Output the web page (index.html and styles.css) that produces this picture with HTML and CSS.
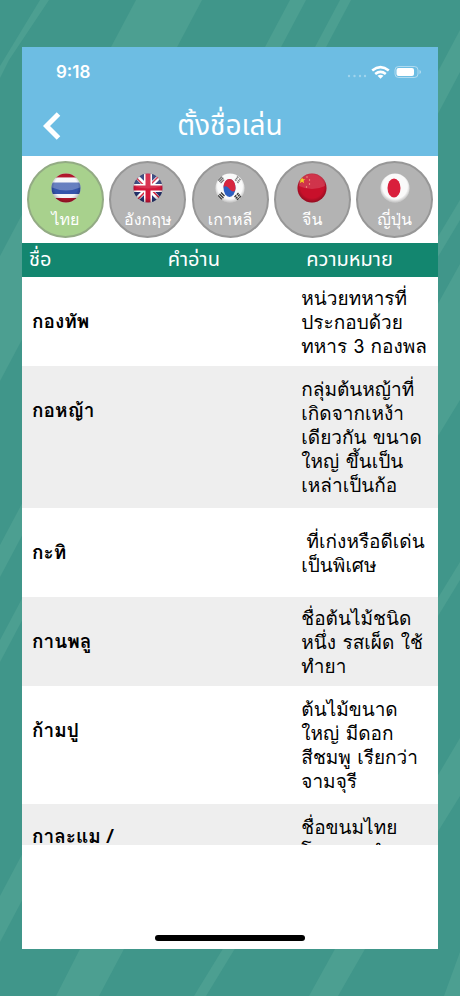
FILE: index.html
```html
<!DOCTYPE html>
<html lang="th">
<head>
<meta charset="utf-8">
<meta name="viewport" content="width=device-width, initial-scale=1">
<title>ตั้งชื่อเล่น</title>
<link rel="stylesheet" href="styles.css">
</head>
<body>
<svg class="backdrop" viewBox="0 0 460 996" preserveAspectRatio="none" aria-hidden="true">
  <g fill="#4c9f91">
    <path d="M40 0h9L9 60 0 78V66z"/>
    <path d="M136 0h66L0 381V256z"/>
    <path d="M290 0h16L0 577V545z"/>
    <path d="M340 0h11L0 662v-22z"/>
    <path d="M460 30v42L0 942v-46z"/>
    <path d="M460 200v20l-60 100v-20z"/>
    <path d="M460 264v136L124 949 99 996H56l24-47z"/>
    <path d="M460 562v18L206 996h-12z"/>
    <path d="M460 738v58L365 949l-27 47h-29l26-47z"/>
    <path d="M460 952v44h-16z"/>
  </g>
</svg>
<div class="screen">
  <header class="top">
    <div class="status">
      <span class="time">9:18</span>
      <svg class="indicators" viewBox="0 0 76 16" role="img" aria-label="Wi-Fi, แบตเตอรี่">
        <g fill="#fff" opacity=".35"><circle cx="3" cy="12" r="1.2"/><circle cx="8.500" cy="12" r="1.200"/><circle cx="14" cy="12" r="1.200"/><circle cx="19" cy="12" r="1.200"/></g>
        <g fill="none" stroke="#fff" stroke-width="2.600"><path d="M26.200 6.400q8.300-6.600 16.600 0M29.200 9.900q5.300-4.200 10.600 0"/></g>
        <path d="M31.500 11.800q3-2.200 6 0l-3 3z" fill="#fff"/>
        <rect x="49" y="2.500" width="23" height="11" rx="3.500" fill="none" stroke="#fff" stroke-opacity=".45"/>
        <rect x="50.500" y="4" width="17.500" height="8" rx="2" fill="#fff"/>
        <path d="M73.500 6v4q1.500-.5 1.500-2t-1.500-2z" fill="#fff" opacity=".5"/>
      </svg>
    </div>
    <div class="titlebar">
      <button class="back" type="button" aria-label="กลับ"><svg viewBox="0 0 18 30"><path d="M15.500 2 3.500 14l12 12" fill="none" stroke="#fff" stroke-width="5"/></svg></button>
      <h1>ตั้งชื่อเล่น</h1>
    </div>
  </header>

  <svg class="defs" aria-hidden="true">
    <defs>
      <clipPath id="ball"><circle cx="15" cy="15" r="14.500"/></clipPath>
      <linearGradient id="shine" x1="0" y1="0" x2="0" y2="1"><stop offset="0" stop-color="#fff" stop-opacity=".25"/><stop offset="1" stop-color="#fff" stop-opacity=".25"/></linearGradient>
      <radialGradient id="shade" cx=".5" cy=".45" r=".55"><stop offset=".7" stop-color="#000" stop-opacity="0"/><stop offset="1" stop-color="#000" stop-opacity=".3"/></radialGradient>
      <radialGradient id="edge" cx=".5" cy=".45" r=".55"><stop offset=".75" stop-color="#555" stop-opacity="0"/><stop offset="1" stop-color="#555" stop-opacity=".4"/></radialGradient>
    </defs>
  </svg>

  <nav class="tabs">
    <button class="tab active" type="button" aria-pressed="true">
      <svg class="flag" viewBox="0 0 30 30"><g clip-path="url(#ball)"><path fill="#f4f5f8" d="M0 0h30v30H0z"/><path fill="#b3182c" d="M0 0h30v4.500H0zM0 25h30v5H0z"/><path fill="#3455ab" d="M0 9.500h30v11.500H0z"/><path fill="url(#shine)" d="M1 4.500h28v10q-14 6-28 0z"/><path fill="url(#shade)" d="M0 0h30v30H0z"/></g></svg>
      <span>ไทย</span>
    </button>
    <button class="tab" type="button" aria-pressed="false">
      <svg class="flag" viewBox="0 0 30 30"><g clip-path="url(#ball)"><path fill="#273675" d="M0 0h30v30H0z"/><path stroke="#fff" stroke-width="4.500" d="M2 2l26 26M28 2 2 28"/><path stroke="#d3203c" stroke-width="1.500" d="M2 3.500l12 12M28 26.500l-12-12M27 2 15 14M3 28l12-12"/><path stroke="#fff" stroke-width="8" d="M15 0v30M0 15h30"/><path stroke="#d3173a" stroke-width="5" d="M15 0v30M0 15h30"/><path fill="url(#shine)" opacity=".5" d="M1 0h28v13q-14 5-28 0z"/><path fill="url(#shade)" d="M0 0h30v30H0z"/></g></svg>
      <span>อังกฤษ</span>
    </button>
    <button class="tab" type="button" aria-pressed="false">
      <svg class="flag" viewBox="0 0 30 30"><g clip-path="url(#ball)"><path fill="#fafafa" d="M0 0h30v30H0z"/><ellipse cx="14.500" cy="15" rx="6" ry="9" fill="#2d5fc0"/><path fill="#d7263f" d="M8.500 15c0-12 12-12 12 0 0 5-4 4-6 1s-5-4-6-1z"/><g stroke="#333" stroke-width="1.300"><path d="M3 7.500l4-4M4.300 8.800l4-4M5.600 10.100l3.500-3.500" opacity=".7"/><path stroke-dasharray="2 1" d="M22 3.500l4 4M21 5l4 4M20 6.500l3.500 3.500" opacity=".6"/><path d="M3 22.500l4 4M4.500 21l4 4M6 19.500l3.500 3.500"/><path stroke-dasharray="2.500 .8" d="M22 27l4-4M20.700 25.500l4-4M19.500 24l4-4"/></g><path fill="url(#edge)" d="M0 0h30v30H0z"/></g></svg>
      <span>เกาหลี</span>
    </button>
    <button class="tab" type="button" aria-pressed="false">
      <svg class="flag" viewBox="0 0 30 30"><g clip-path="url(#ball)"><path fill="#c8102b" d="M0 0h30v30H0z"/><path fill="url(#shine)" opacity=".6" d="M2 0h26v13q-13 6-26 0z"/><path fill="#f5cf24" d="M5 4l1 2.300h2.300L6.500 7.800l.7 2.400L5 8.700l-2.200 1.500.7-2.400-1.800-1.500H4z"/><g fill="#f3b08a"><circle cx="10" cy="4" r=".7"/><circle cx="12.500" cy="7" r=".7"/><circle cx="12.500" cy="11" r=".7"/><circle cx="9.500" cy="14" r=".7"/></g><path fill="url(#shade)" d="M0 0h30v30H0z"/></g></svg>
      <span>จีน</span>
    </button>
    <button class="tab" type="button" aria-pressed="false">
      <svg class="flag" viewBox="0 0 30 30"><g clip-path="url(#ball)"><path fill="#fafafa" d="M0 0h30v30H0z"/><ellipse cx="14" cy="15" rx="6.500" ry="9.500" fill="#d91f3c"/><path fill="url(#edge)" d="M0 0h30v30H0z"/></g></svg>
      <span>ญี่ปุ่น</span>
    </button>
  </nav>

  <main class="list">
    <table>
      <thead><tr><th scope="col">ชื่อ</th><th scope="col">คำอ่าน</th><th scope="col">ความหมาย</th></tr></thead>
      <tbody>
        <tr><td><div class="name">กองทัพ</div></td><td></td><td class="meaning">หน่วยทหารที่<br>ประกอบด้วย<br>ทหาร 3 กองพล</td></tr>
        <tr class="long"><td><div class="name">กอหญ้า</div></td><td></td><td class="meaning">กลุ่มต้นหญ้าที่<br>เกิดจากเหง้า<br>เดียวกัน ขนาด<br>ใหญ่ ขึ้นเป็น<br>เหล่าเป็นก้อ</td></tr>
        <tr><td><div class="name">กะทิ</div></td><td></td><td class="meaning">&nbsp;ที่เก่งหรือดีเด่น<br>เป็นพิเศษ</td></tr>
        <tr><td><div class="name">กานพลู</div></td><td></td><td class="meaning">ชื่อต้นไม้ชนิด<br>หนึ่ง รสเผ็ด ใช้<br>ทำยา</td></tr>
        <tr class="long"><td><div class="name">ก้ามปู</div></td><td></td><td class="meaning">ต้นไม้ขนาด<br>ใหญ่ มีดอก<br>สีชมพู เรียกว่า<br>จามจุรี</td></tr>
        <tr class="long"><td><div class="name">กาละแม /<br>กะละแม</div></td><td></td><td class="meaning">ชื่อขนมไทย<br>โบราณ ทำ<br>จากแป้ง</td></tr>
      </tbody>
    </table>
  </main>
  <footer class="bottom"><div class="home"></div></footer>
</div>
</body>
</html>
```
FILE: styles.css
```css
* { box-sizing: border-box; }

body {
  margin: 0;
  height: 100vh;
  padding: 47px 22px;
  background: #40968a;
  font-family: Loma, "Liberation Sans", sans-serif;
  color: #000;
}

.backdrop {
  position: absolute;
  inset: 0;
  width: 100%;
  height: 100%;
  z-index: -1;
}

.defs { position: absolute; width: 0; height: 0; }

.screen {
  display: flex;
  flex-direction: column;
  height: 100%;
  background: #fff;
  overflow: hidden;
}

.top { background: #6dbde3; color: #fff; }

.status {
  display: flex;
  justify-content: space-between;
  align-items: center;
  height: 50px;
  padding: 0 16px 0 34px;
}

.time { font: 600 17px Inter, "Liberation Sans", sans-serif; }

.indicators { width: 76px; height: 16px; }

.titlebar {
  display: grid;
  grid-template-columns: 60px 1fr 60px;
  align-items: center;
  height: 59px;
}

.back {
  justify-self: center;
  padding: 0;
  border: 0;
  background: none;
  line-height: 0;
}

.back svg { width: 18px; height: 30px; }

h1 {
  margin: 0;
  font: 400 28px "Noto Sans Thai", Loma, sans-serif;
  text-align: center;
}

.tabs {
  display: flex;
  justify-content: space-between;
  padding: 5px;
}

.tab {
  display: flex;
  flex-direction: column;
  align-items: center;
  width: 77px;
  height: 77px;
  padding: 10px 0 0;
  border: 2px solid #979797;
  border-radius: 50%;
  background: #b3b3b3;
  color: #fff;
  font: 400 16px/34px Loma, sans-serif;
}

.tab.active { background: #a8d18d; border-color: #93ab84; }

.flag { width: 30px; height: 30px; flex: none; }

.list { flex: 1; min-height: 0; overflow: hidden; }

table {
  width: 100%;
  border-collapse: collapse;
  table-layout: fixed;
}

th {
  height: 34px;
  padding: 0 7px;
  background: #13866f;
  color: #fff;
  font: 400 20px/28px "Noto Sans Thai", Loma, sans-serif;
  text-align: left;
}

td { height: 88px; padding: 0; vertical-align: top; }

tbody tr:nth-child(even) { background: #eee; }

.name {
  display: flex;
  align-items: center;
  height: 88px;
  padding-left: 10px;
  font-size: 19px;
  line-height: 24px;
  font-weight: 700;
}

.meaning {
  height: 89px;
  padding: 8px 0 8px 2px;
  font-size: 19px;
  line-height: 24px;
  white-space: nowrap;
  vertical-align: middle;
}

.long .meaning { padding-top: 11px; padding-bottom: 11px; }

.bottom {
  display: flex;
  align-items: flex-end;
  justify-content: center;
  height: 104px;
  padding-bottom: 8px;
}

.home { width: 36%; height: 6px; border-radius: 3px; background: #000; }
```
